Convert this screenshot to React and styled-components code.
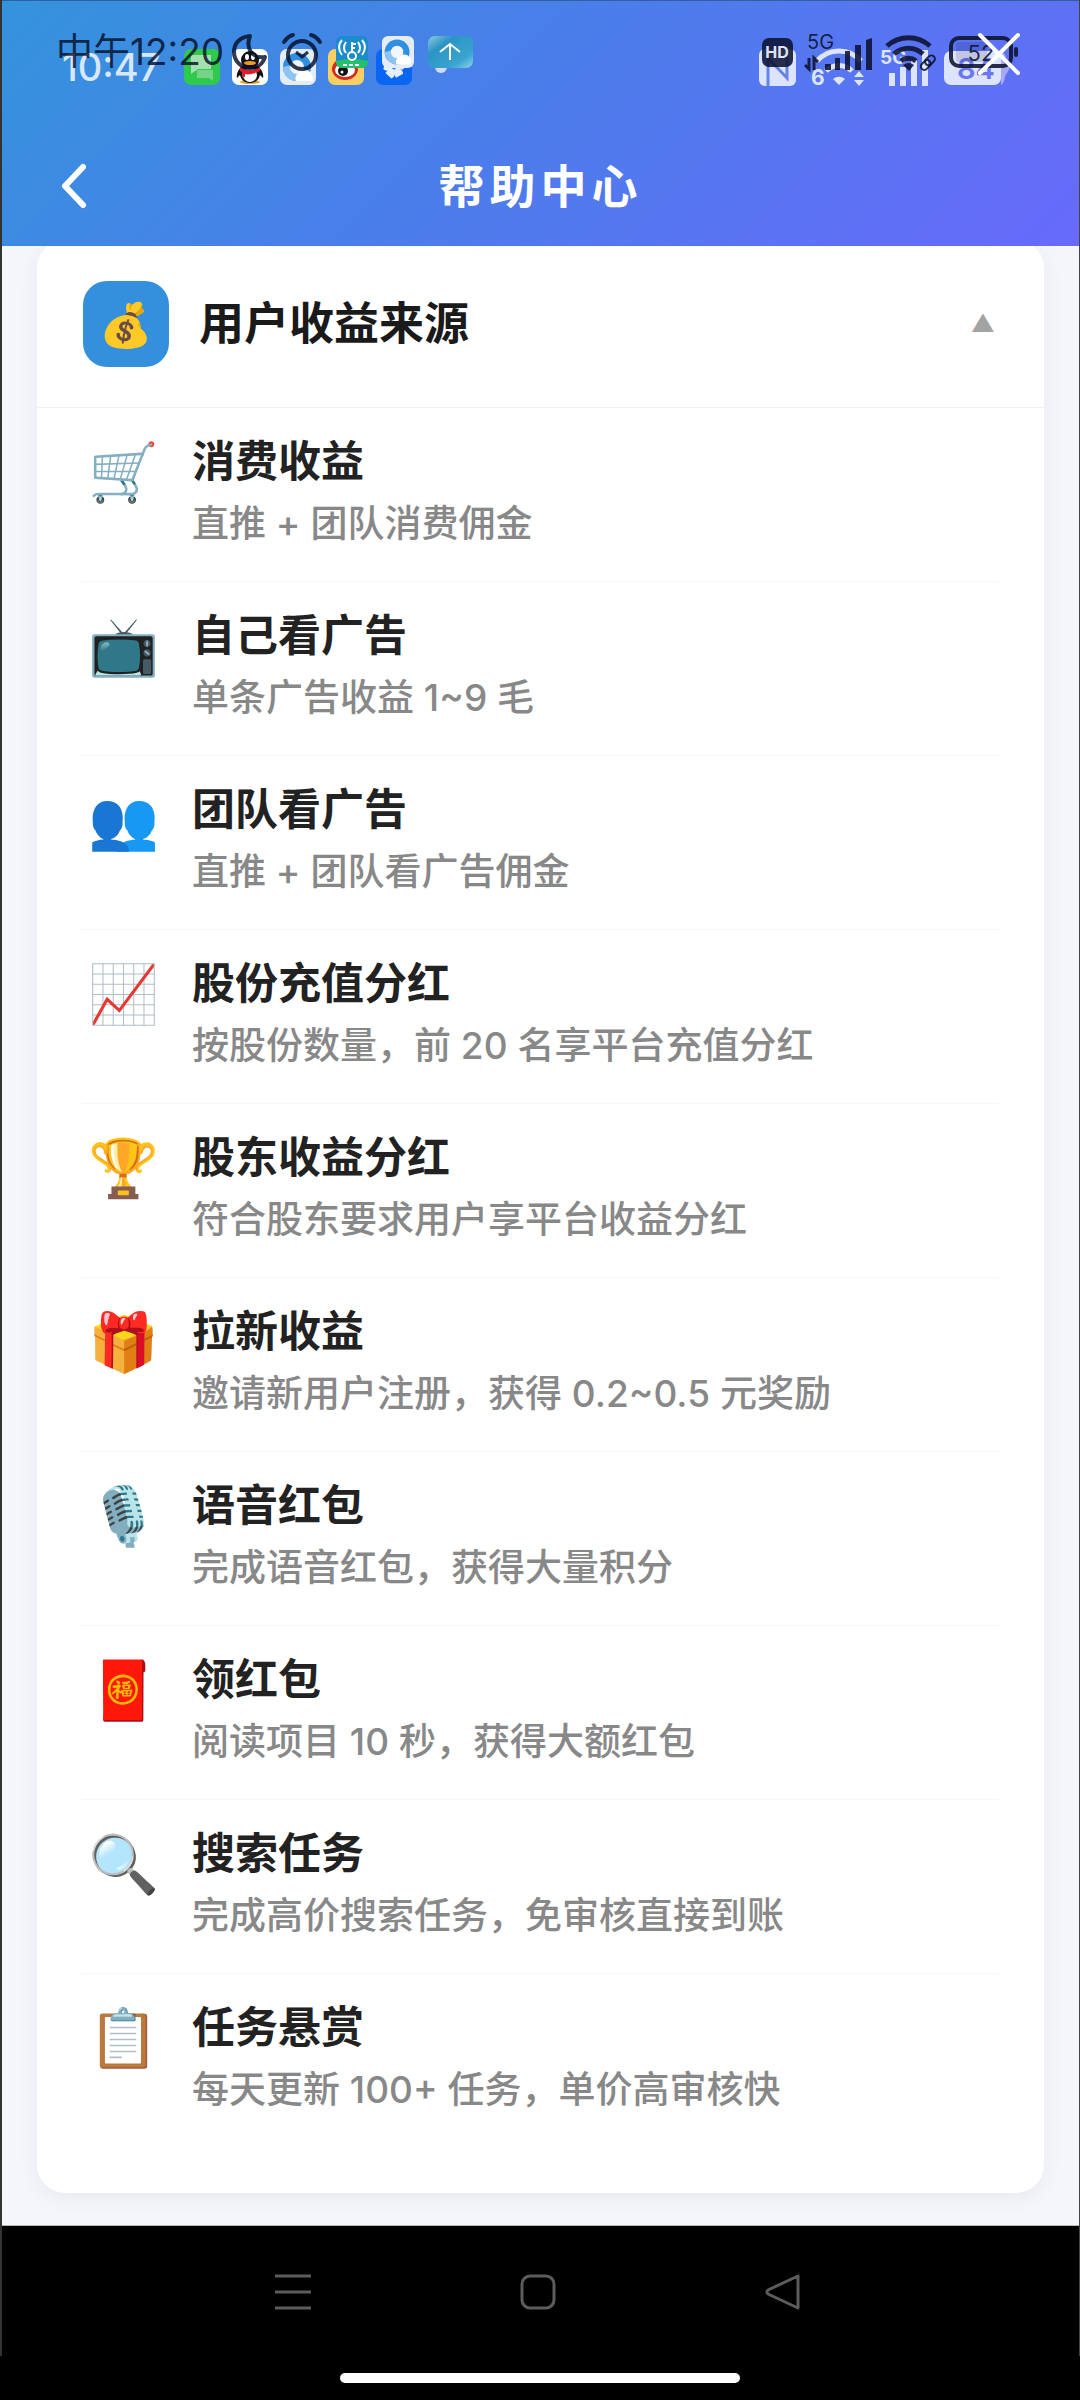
import { useState } from 'react'
import styled, { createGlobalStyle } from 'styled-components'

const GlobalStyle = createGlobalStyle`
    * {
        box-sizing: border-box;
    }
    body {
        margin: 0;
        background: #000;
        font-family: Inter, 'Noto Sans CJK SC', sans-serif;
    }
    button {
        font-family: inherit;
        background: none;
        border: 0;
        padding: 0;
        cursor: pointer;
    }
    svg {
        overflow: visible;
    }
`

const Screen = styled.div`
    border-left: 2px solid #333;
    border-right: 1px solid #444;
    background: #f4f6fb;
`

const Header = styled.header`
    position: relative;
    z-index: 1;
    height: 246px;
    padding-top: 126px;
    border-top: 1px solid #355f9c;
    background: linear-gradient(135deg, #3493dc 0%, #4a7eea 45%, #686afb 100%);
`

const StatusLayer = styled.div`
    position: absolute;
    top: ${({ top }) => top}px;
    left: 0;
    right: 0;
    height: 38px;
    padding: 0 ${({ right }) => right}px 0 ${({ left }) => left}px;
    display: flex;
    justify-content: space-between;
    align-items: center;
`

const StatusGroup = styled.div`
    display: flex;
    align-items: center;
    gap: ${({ gap }) => gap}px;
    color: ${({ color }) => color};
`

const Clock = styled.span`
    width: ${({ width }) => width}px;
    font-size: ${({ size }) => size}px;
    font-weight: ${({ weight }) => weight || 400};
    line-height: 38px;
    white-space: nowrap;
`

const CloseButton = styled.button`
    position: absolute;
    top: 32px;
    right: 59px;
    height: 42px;
    color: #fff;
`

const TitleBar = styled.div`
    height: 118px;
    padding: 0 56px;
    display: grid;
    grid-template-columns: 40px 1fr 40px;
    align-items: center;
`

const BackButton = styled.button`
    height: 48px;
    text-align: left;
    color: #fff;
`

const PageTitle = styled.h1`
    margin: 0;
    text-align: center;
    color: #fff;
    font-size: 46px;
    font-weight: 700;
    line-height: 60px;
    letter-spacing: 5px;
`

const Main = styled.main`
    padding: 0 35px 32px;
    border-bottom: 1px solid #b8b8b8;
`

const Card = styled.section`
    margin-top: -6px;
    padding-bottom: 46px;
    border-radius: 28px;
    background: #fff;
    box-shadow: 0 6px 22px rgba(0, 0, 0, 0.05);
`

const CardHeader = styled.button`
    width: 100%;
    padding: 41px 46px 40px;
    display: flex;
    align-items: center;
    gap: 30px;
    border-bottom: 1px solid #f2f2f2;
`

const CardIcon = styled.span`
    width: 86px;
    height: 86px;
    border-radius: 24px;
    background: #3490dc;
    font-size: 43px;
    line-height: 86px;
    text-align: center;
`

const CardTitle = styled.span`
    flex: 1;
    text-align: left;
    font-size: 45px;
    font-weight: 700;
    line-height: 60px;
    color: #1a1a1a;
`

const Toggle = styled.span`
    width: 30px;
    text-align: center;
    font-size: 24px;
    line-height: 30px;
    color: #a3a3a3;
`

const List = styled.ul`
    list-style: none;
    margin: 0;
    padding: 0 45px;
`

const Item = styled.li`
    display: flex;
    gap: 28px;
    padding: 28px 0;
    border-bottom: 1px solid #f7f7f7;
    &:last-child {
        border-bottom: 0;
    }
`

const ItemIcon = styled.span`
    width: 82px;
    font-size: 57px;
    line-height: 72px;
    text-align: center;
`

const ItemTitle = styled.h2`
    margin: 0 0 8px;
    font-size: 43px;
    font-weight: 700;
    line-height: 50px;
    color: #222;
`

const ItemText = styled.p`
    margin: 0;
    font-size: 37px;
    font-weight: 500;
    line-height: 59px;
    color: #888;
`

const NavBar = styled.nav`
    height: 130px;
    padding: 4px 174px 0 169px;
    display: grid;
    grid-template-columns: repeat(3, 1fr);
    align-items: center;
    background: #000;
    color: #5c5c5c;
`

const NavButton = styled.button`
    height: 48px;
    color: inherit;
`

const HomeArea = styled.footer`
    height: 44px;
    display: flex;
    justify-content: center;
    padding-top: 17px;
    background: #000;
`

const HomeBar = styled.div`
    width: 37%;
    height: 10px;
    border-radius: 5px;
    background: #fff;
`

const MessageIcon = () => (
    <svg width="36" height="36" viewBox="0 0 36 36">
        <rect width="36" height="36" rx="7" fill="#2fc94c" />
        <path d="M7 6h20v14H14l-7 5z" fill="#a6dfae" />
        <path d="M13 21h16v11l-4-3H13z" fill="#74d384" />
    </svg>
)

const PenguinIcon = () => (
    <svg width="36" height="36" viewBox="0 0 36 36">
        <rect width="36" height="36" rx="7" fill="#fff" />
        <ellipse cx="18" cy="33" rx="10" ry="2" fill="#e9a72c" />
        <path d="M10 17c-4 4-6 8-5 12l3-3c1 5 5 8 10 8s9-3 10-8l3 3c1-4-1-8-5-12z" fill="#111" />
        <ellipse cx="18" cy="26" rx="7" ry="7" fill="#fff" />
        <ellipse cx="18" cy="11" rx="9" ry="9" fill="#111" />
        <path d="M8 18c6 4 14 4 20 0v4c-6 3-12 4-15 3v3h-3v-5l-2-1z" fill="#d8202c" />
        <ellipse cx="15" cy="8" rx="2" ry="3" fill="#fff" />
        <ellipse cx="21" cy="8" rx="2" ry="3" fill="#fff" />
        <ellipse cx="18" cy="14" rx="6" ry="2" fill="#f09a26" />
    </svg>
)

const BrowserIcon = ({ size }) => (
    <svg width={size} height={size} viewBox="0 0 36 36">
        <rect width="36" height="36" rx="7" fill="#e4ecf5" />
        <circle cx="17" cy="18" r="14" fill="#2f8fe4" />
        <path d="M3 18a14 14 0 0 0 14 14l2-7a8 8 0 0 1-8-9z" fill="#8cc3f2" />
        <circle cx="17" cy="18" r="7" fill="#f1f6fc" />
        <path d="M16 32a6 6 0 0 1 3-8 7 7 0 0 1 10-2c3 2 4 6 4 10z" fill="#fff" />
    </svg>
)

const EyeIcon = () => (
    <svg width="36" height="36" viewBox="0 0 36 36">
        <rect width="36" height="36" rx="7" fill="#f8cf62" />
        <ellipse cx="17" cy="20" rx="13" ry="11" fill="#d22c20" />
        <ellipse cx="17" cy="21" rx="10" ry="7" fill="#fff" />
        <circle cx="15" cy="22" r="5" fill="#111" />
        <circle cx="14" cy="23" r="1.5" fill="#fff" />
        <path d="M24 5c6 0 9 5 7 10" fill="none" stroke="#ef8a23" strokeWidth="3" />
    </svg>
)

const PinwheelIcon = () => (
    <svg width="36" height="36" viewBox="0 0 36 36">
        <rect width="36" height="36" rx="7" fill="#0a66f2" />
        {[0, 72, 144, 216, 288].map((angle) => (
            <path
                key={angle}
                d="M18 18c-5-2-6-6-4-9l8 1c0 3-1 6-4 8z"
                fill="#e4efff"
                transform={`rotate(${angle} 18 19)`}
            />
        ))}
    </svg>
)

const Dot = () => (
    <svg width="36" height="36" viewBox="0 0 36 36">
        <circle cx="17" cy="18" r="6" fill="#cfdcfb" />
    </svg>
)

const NfcIcon = () => (
    <svg width="37" height="37" viewBox="0 0 37 37">
        <rect width="37" height="37" rx="6" fill="currentColor" />
        <path d="M9 37V9l19 20V7" fill="none" stroke="#6584ea" strokeWidth="3" />
    </svg>
)

const GhostWifi = () => (
    <svg width="54" height="37" viewBox="0 0 54 37" fill="none" stroke="currentColor" strokeWidth="5">
        <path d="M6 12a29 29 0 0 1 44 0" />
        <path d="M15 22a18 18 0 0 1 26 0" />
        <path d="M22 30a9 9 0 0 1 12 0l-6 6z" fill="currentColor" stroke="none" />
        <path d="M43 28l5-6 5 6zM43 31l5 6 5-6z" fill="currentColor" stroke="none" />
        <text x="0" y="36" fontSize="21" fontWeight="700" fill="currentColor" stroke="none">
            6
        </text>
    </svg>
)

const GhostSignal = () => (
    <svg width="49" height="37" viewBox="0 0 49 37" fill="currentColor">
        <text x="0" y="15" fontSize="19" fontWeight="700">
            5G
        </text>
        <path d="M9 24h6v13H9zM20 18h6v19h-6zM31 11h6v26h-6zM42 1h6v36h-6z" />
    </svg>
)

const GhostBattery = () => (
    <svg width="67" height="37" viewBox="0 0 67 37">
        <rect y="2" width="57" height="34" rx="7" fill="currentColor" />
        <path d="M57 3c4 1 5 4 5 8 5 1 5 4 3 9-1 4-3 4-4 8-1 5-2 7-4 8z" fill="#a5a8fb" />
        <text x="32" y="30" fontSize="29" fontWeight="600" textAnchor="middle" fill="#6a78ee">
            84
        </text>
    </svg>
)

const MoonIcon = () => (
    <svg width="36" height="36" viewBox="0 0 36 36" fill="none" stroke="currentColor" strokeWidth="4">
        <path d="M18 2C7 3 2 10 2 18c0 9 7 16 16 16 7 0 13-4 15-11-12 2-20-8-15-21z" strokeLinejoin="round" />
    </svg>
)

const AlarmIcon = () => (
    <svg width="40" height="38" viewBox="0 0 40 38" fill="none" stroke="currentColor" strokeWidth="4">
        <circle cx="20" cy="22" r="14" />
        <path d="M14 19l6 5 6-5" strokeWidth="3" />
        <path d="M2 9c2-3 5-6 9-7M38 9c-2-3-5-6-9-7" strokeLinecap="round" />
    </svg>
)

const KeyIcon = () => (
    <svg width="32" height="32" viewBox="0 0 32 32" fill="none" stroke="#fff" strokeWidth="2">
        <rect width="32" height="32" rx="6" fill="#1a8ccb" stroke="none" />
        <path d="M0 25q16-4 32 0v1a6 6 0 0 1-6 6H6a6 6 0 0 1-6-6z" fill="#27c06a" stroke="none" />
        <circle cx="16" cy="20" r="4" />
        <path d="M16 16V6M16 8h4M16 12h3" />
        <path d="M10 6q-4 6 0 11M6 4q-6 7 0 15M22 6q4 6 0 11M26 4q6 7 0 15" />
        <path d="M7 29h18" strokeDasharray="4 2" />
    </svg>
)

const UploadIcon = () => (
    <svg width="45" height="32" viewBox="0 0 45 32">
        <defs>
            <linearGradient id="upload" x1="0" y1="0" x2="1" y2="1">
                <stop offset="0" stopColor="#8ccbe0" />
                <stop offset="0.3" stopColor="#2b94c4" />
                <stop offset="0.75" stopColor="#3aa5d0" />
                <stop offset="1" stopColor="#8fd2ea" />
            </linearGradient>
        </defs>
        <rect width="45" height="32" rx="7" fill="url(#upload)" />
        <path d="M22 24V9M12 16l10-8 10 8" fill="none" stroke="#fff" strokeWidth="2" />
    </svg>
)

const HdIcon = () => (
    <svg width="31" height="29" viewBox="0 0 31 29">
        <rect width="31" height="29" rx="7" fill="currentColor" />
        <text x="15" y="20" fontSize="16" fontWeight="700" textAnchor="middle" fill="#dce3fb">
            HD
        </text>
    </svg>
)

const SignalIcon = () => (
    <svg width="68" height="38" viewBox="0 0 68 38" fill="currentColor">
        <text x="2" y="16" fontSize="20">
            5G
        </text>
        <path d="M4 25v11l-4-4M9 37V25l4 4" fill="none" stroke="currentColor" strokeWidth="3" />
        <path d="M20 31h6v6h-6zM30 25h5v12h-5zM40 18h5v19h-5zM50 12h6v25h-6zM61 7l6-2v32h-6z" />
    </svg>
)

const WifiIcon = () => (
    <svg width="52" height="38" viewBox="0 0 52 38" fill="none" stroke="currentColor" strokeWidth="5">
        <path d="M2 13a32 32 0 0 1 43 0" />
        <path d="M9 21a21 21 0 0 1 29 0" />
        <path d="M16 28a12 12 0 0 1 15 0" />
        <path d="M18 32q6-4 11 0l-5 6z" fill="currentColor" stroke="none" />
        <g strokeWidth="2">
            <rect x="35" y="29" width="11" height="7" rx="3.5" transform="rotate(-45 40 32)" />
            <rect x="40" y="24" width="11" height="7" rx="3.5" transform="rotate(-45 45 28)" />
        </g>
    </svg>
)

const BatteryIcon = () => (
    <svg width="69" height="38" viewBox="0 0 69 38">
        <rect x="2" y="5" width="60" height="28" rx="8" fill="none" stroke="currentColor" strokeWidth="4" />
        <rect x="7" y="9" width="31" height="20" rx="3" fill="currentColor" opacity="0.15" />
        <rect x="65" y="14" width="4" height="10" rx="2" fill="currentColor" />
        <text x="32" y="28" fontSize="22" textAnchor="middle" fill="currentColor">
            52
        </text>
    </svg>
)

const items = [
    { icon: '🛒', title: '消费收益', text: '直推 + 团队消费佣金' },
    { icon: '📺', title: '自己看广告', text: '单条广告收益 1~9 毛' },
    { icon: '👥', title: '团队看广告', text: '直推 + 团队看广告佣金' },
    { icon: '📈', title: '股份充值分红', text: '按股份数量，前 20 名享平台充值分红' },
    { icon: '🏆', title: '股东收益分红', text: '符合股东要求用户享平台收益分红' },
    { icon: '🎁', title: '拉新收益', text: '邀请新用户注册，获得 0.2~0.5 元奖励' },
    { icon: '🎙️', title: '语音红包', text: '完成语音红包，获得大量积分' },
    { icon: '🧧', title: '领红包', text: '阅读项目 10 秒，获得大额红包' },
    { icon: '🔍', title: '搜索任务', text: '完成高价搜索任务，免审核直接到账' },
    { icon: '📋', title: '任务悬赏', text: '每天更新 100+ 任务，单价高审核快' },
]

const StatusBar = () => (
    <>
        <StatusLayer top={47} left={60} right={68}>
            <StatusGroup gap={12} color="#d8e8fc">
                <Clock width={110} size={38} weight={500}>
                    10:47
                </Clock>
                <MessageIcon />
                <PenguinIcon />
                <BrowserIcon size={36} />
                <EyeIcon />
                <PinwheelIcon />
                <Dot />
            </StatusGroup>
            <StatusGroup gap={15} color="#dde4ff">
                <NfcIcon />
                <GhostWifi />
                <GhostSignal />
                <GhostBattery />
            </StatusGroup>
        </StatusLayer>
        <StatusLayer top={32} left={54} right={61}>
            <StatusGroup gap={14} color="rgba(5, 15, 40, 0.82)">
                <Clock width={162} size={37}>
                    中午12:20
                </Clock>
                <MoonIcon />
                <AlarmIcon />
                <KeyIcon />
                <BrowserIcon size={32} />
                <UploadIcon />
            </StatusGroup>
            <StatusGroup gap={12} color="rgba(12, 18, 48, 0.88)">
                <HdIcon />
                <SignalIcon />
                <WifiIcon />
                <BatteryIcon />
            </StatusGroup>
        </StatusLayer>
    </>
)

const App = () => {
    const [isOpen, setIsOpen] = useState(true)

    return (
        <>
            <GlobalStyle />
            <Screen>
                <Header>
                    <StatusBar />
                    <CloseButton aria-label="关闭">
                        <svg width="42" height="42" viewBox="0 0 42 42" fill="none" stroke="currentColor" strokeWidth="4">
                            <path d="M2 2l38 38M40 2L2 40" strokeLinecap="round" />
                        </svg>
                    </CloseButton>
                    <TitleBar>
                        <BackButton aria-label="返回">
                            <svg width="34" height="48" viewBox="0 0 34 48" fill="none" stroke="currentColor" strokeWidth="6">
                                <path d="M25 5L7 24l18 19" strokeLinecap="round" strokeLinejoin="round" />
                            </svg>
                        </BackButton>
                        <PageTitle>帮助中心</PageTitle>
                    </TitleBar>
                </Header>
                <Main>
                    <Card>
                        <CardHeader aria-expanded={isOpen} onClick={() => setIsOpen(!isOpen)}>
                            <CardIcon>💰</CardIcon>
                            <CardTitle>用户收益来源</CardTitle>
                            <Toggle>{isOpen ? '▲' : '▼'}</Toggle>
                        </CardHeader>
                        {isOpen && (
                            <List>
                                {items.map((item) => (
                                    <Item key={item.title}>
                                        <ItemIcon>{item.icon}</ItemIcon>
                                        <div>
                                            <ItemTitle>{item.title}</ItemTitle>
                                            <ItemText>{item.text}</ItemText>
                                        </div>
                                    </Item>
                                ))}
                            </List>
                        )}
                    </Card>
                </Main>
                <NavBar>
                    <NavButton aria-label="菜单">
                        <svg width="36" height="40" viewBox="0 0 36 40" stroke="currentColor" strokeWidth="3">
                            <path d="M0 4h36M0 20h36M0 36h36" />
                        </svg>
                    </NavButton>
                    <NavButton aria-label="主页">
                        <svg width="36" height="40" viewBox="0 0 36 40" fill="none" stroke="currentColor" strokeWidth="3">
                            <rect x="2" y="4" width="32" height="32" rx="8" />
                        </svg>
                    </NavButton>
                    <NavButton aria-label="后退">
                        <svg width="36" height="40" viewBox="0 0 36 40" fill="none" stroke="currentColor" strokeWidth="3">
                            <path d="M33 4v32L3 22q-2-2 0-4z" strokeLinejoin="round" />
                        </svg>
                    </NavButton>
                </NavBar>
            </Screen>
            <HomeArea>
                <HomeBar />
            </HomeArea>
        </>
    )
}

export default App
